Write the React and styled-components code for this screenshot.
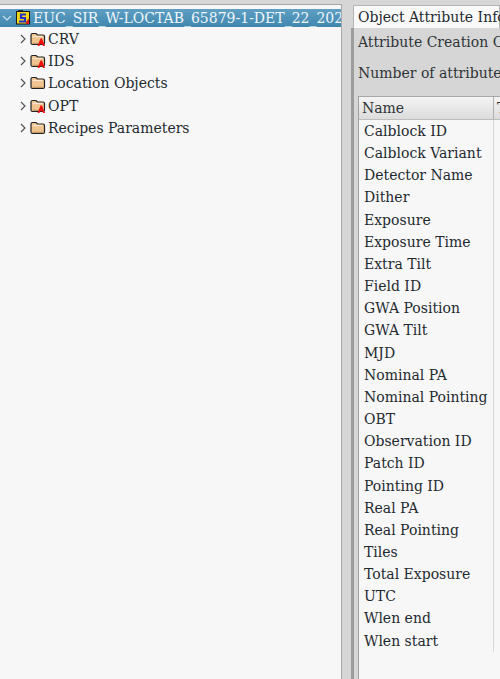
import React from 'react';
import styled, { createGlobalStyle } from 'styled-components';

const GlobalStyle = createGlobalStyle`
    html, body { margin: 0; padding: 0; }
    body {
        width: 500px;
        height: 679px;
        overflow: hidden;
        background: #d6d6d6;
        font-family: "DejaVu Serif", serif;
        font-size: 14px;
        color: #2e3436;
    }
`;

const Window = styled.div`
    display: flex;
    width: 500px;
    height: 679px;
    padding-top: 4px;
    box-sizing: border-box;
`;

const TreePanel = styled.div`
    width: 342px;
    flex: none;
    background: #f7f7f7;
    border-top: 1px solid #a8a8a8;
    border-right: 1px solid #a8a8a8;
    box-sizing: border-box;
    padding-top: 4px;
    overflow: hidden;
`;

const Row = styled.div`
    display: flex;
    align-items: center;
    height: 22.4px;
    padding-left: ${p => p.$indent}px;
    white-space: nowrap;
    color: #1f2a30;
`;

const RootRow = styled(Row)`
    height: 18px;
    margin-bottom: 0.4px;
    padding-bottom: 1px;
    box-sizing: border-box;
    color: #eef6fb;
    background: linear-gradient(#5f9fc3, #3f86ae);
`;

const Arrow = styled.svg`
    width: 10px;
    height: 12px;
    flex: none;
    margin-right: ${p => p.$gap}px;
`;

const Label = styled.span`
    margin-left: ${p => p.$gap || 2}px;
`;

const Splitter = styled.div`
    width: 9px;
    flex: none;
    background: #d6d6d6;
`;

const InfoPanel = styled.div`
    flex: 1;
    min-width: 0;
    display: flex;
    flex-direction: column;
    overflow: hidden;
`;

const Tab = styled.div`
    height: 23px;
    margin: 1px 0 0 2px;
    padding-left: 4px;
    background: #f9f9f9;
    border: 1px solid #b4b4b4;
    border-bottom: none;
    line-height: 23px;
    color: #1f2a30;
    white-space: nowrap;
    box-sizing: border-box;
`;

const TabBody = styled.div`
    flex: 1;
    min-height: 0;
    display: flex;
    flex-direction: column;
    padding: 3px 0 0 4px;
    background: #d6d6d6;
    border-left: 3px solid #9c9c9c;
`;

const InfoLine = styled.div`
    height: 22px;
    margin-bottom: ${p => p.$after}px;
    line-height: 22px;
    white-space: nowrap;
`;

const AttrTable = styled.div`
    flex: 1;
    min-height: 0;
    background: #f7f7f7;
    border-left: 1px solid #a0a0a0;
`;

const HeaderRow = styled.div`
    display: flex;
    height: 24px;
    background: linear-gradient(#f4f4f4, #dcdcdc);
    border-top: 1px solid #a8a8a8;
    border-bottom: 1px solid #bdbdbd;
    box-sizing: border-box;
`;

const HeaderCell = styled.div`
    width: ${p => p.$width}px;
    flex: none;
    padding-left: 3px;
    line-height: 22px;
    box-sizing: border-box;
    border-right: 1px solid #b0b0b0;
    white-space: nowrap;
    overflow: hidden;
`;

const Columns = styled.div`
    display: flex;
    align-items: flex-start;
`;

const NameColumn = styled.div`
    width: 135px;
    flex: none;
    box-sizing: border-box;
    padding-left: 5px;
    border-right: 1px solid #d9d9d9;
`;

const NameCell = styled.div`
    height: 22.17px;
    line-height: 22px;
    white-space: nowrap;
    color: #1f2a30;
`;

const Chevron = ({ open, gap }) => (
    <Arrow viewBox="0 0 10 12" $gap={gap}>
        <path
            d={open ? 'M1 4l4 4 4-4' : 'M3 2l4 4-4 4'}
            fill="none"
            stroke={open ? '#cfe3ef' : '#555'}
            strokeWidth="1.2"
        />
    </Arrow>
);

const FileIcon = () => (
    <svg width="14" height="15" viewBox="0 0 14 15" style={{ flex: 'none' }}>
        <path d="M2 0h5v2H2z" fill="#1d2a44" />
        <rect x="0.5" y="1.5" width="13" height="12.500" fill="#f4d816" stroke="#1a1a1a" />
        <path d="M10 4.500H5v3.500h4v3.500H3" fill="none" stroke="#2433c8" strokeWidth="2.200" />
        <path d="M10 12l3-3.500V14h-3z" fill="#d81818" />
    </svg>
);

const FolderIcon = ({ attr }) => (
    <svg width="16" height="14" viewBox="0 0 16 14" style={{ flex: 'none' }}>
        <path
            d="M1 3Q1 1.500 2.500 1.500H6L7.500 3h5.500Q14.500 3 14.500 4.500v6.500q0 1.500-1.500 1.500H2.500Q1 12.500 1 11z"
            fill="#efc48f"
            stroke="#222"
            strokeWidth="1.200"
        />
        <path d="M2.500 4.500h10" stroke="#fbe8d0" strokeWidth="1.200" />
        <path d="M2.500 11.300h10.500" stroke="#b98d5c" strokeWidth="1" />
        {attr && <path d="M7.500 14l3-7.500h1.500l3 7.500h-2l-.6-1.800h-2.400L9.500 14z" fill="#f01010" />}
    </svg>
);

const folders = [
    { name: 'CRV', attr: true },
    { name: 'IDS', attr: true },
    { name: 'Location Objects' },
    { name: 'OPT', attr: true },
    { name: 'Recipes Parameters' },
];

const attributes = [
    'Calblock ID', 'Calblock Variant', 'Detector Name', 'Dither', 'Exposure',
    'Exposure Time', 'Extra Tilt', 'Field ID', 'GWA Position', 'GWA Tilt', 'MJD',
    'Nominal PA', 'Nominal Pointing', 'OBT', 'Observation ID', 'Patch ID',
    'Pointing ID', 'Real PA', 'Real Pointing', 'Tiles', 'Total Exposure', 'UTC',
    'Wlen end', 'Wlen start',
];

const App = () => (
    <>
        <GlobalStyle />
        <Window>
            <TreePanel>
                <RootRow $indent={2}>
                    <Chevron open gap={4} />
                    <FileIcon />
                    <Label $gap={3}>EUC_SIR_W-LOCTAB_65879-1-DET_22_2024</Label>
                </RootRow>
                {folders.map(f => (
                    <Row key={f.name} $indent={18}>
                        <Chevron gap={2} />
                        <FolderIcon attr={f.attr} />
                        <Label>{f.name}</Label>
                    </Row>
                ))}
            </TreePanel>
            <Splitter />
            <InfoPanel>
                <Tab>Object Attribute Info</Tab>
                <TabBody>
                    <InfoLine $after={8.5}>Attribute Creation Order</InfoLine>
                    <InfoLine $after={12.5}>Number of attributes = 24</InfoLine>
                    <AttrTable>
                        <HeaderRow>
                            <HeaderCell $width={135}>Name</HeaderCell>
                            <HeaderCell $width={60}>Type</HeaderCell>
                        </HeaderRow>
                        <Columns>
                            <NameColumn>
                                {attributes.map(a => <NameCell key={a}>{a}</NameCell>)}
                            </NameColumn>
                        </Columns>
                    </AttrTable>
                </TabBody>
            </InfoPanel>
        </Window>
    </>
);

export default App;
